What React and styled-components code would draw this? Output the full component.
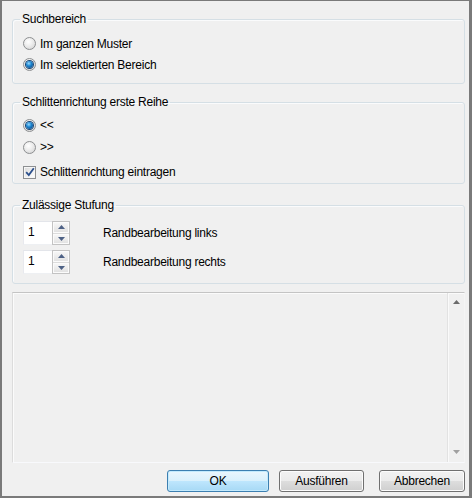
import React from "react";
import styled, { createGlobalStyle } from "styled-components";

const Global = createGlobalStyle`
  html, body { margin: 0; padding: 0; background: #f0f0f0; }
  * { box-sizing: border-box; }
  body { font-family: "Liberation Sans", Arial, sans-serif; font-size: 12px; letter-spacing: -0.25px; color: #000; }
`;

const Window = styled.div`
  width: 472px;
  height: 498px;
  background: #f0f0f0;
  border-style: solid;
  border-color: #7a7a7a;
  border-width: 1px 3px 2px 2px;
  padding: 11px 4px 0 10px;
  display: flex;
  flex-direction: column;
`;

const Group = styled.fieldset`
  margin: ${(p) => p.$top || 0}px 0 0 0;
  padding: 0 0 0 10px;
  border: 1px solid #d5dfe5;
  border-radius: 3px;
  box-shadow: inset 1px 1px 0 #fafbfc;
  min-width: 0;
`;

const Legend = styled.legend`
  padding: 0 2px;
  margin-left: -3px;
  line-height: 14px;
  height: 14px;
`;

const Body = styled.div`
  display: flex;
  flex-direction: column;
  padding-top: ${(p) => p.$pt}px;
  padding-bottom: ${(p) => p.$pb}px;
  gap: ${(p) => p.$gap || 0}px;
`;

const Row = styled.div`
  display: flex;
  align-items: center;
  height: ${(p) => p.$h || 21}px;
  margin-top: ${(p) => p.$mt || 0}px;
`;

const RadioCircle = styled.span`
  width: 13px;
  height: 13px;
  border-radius: 50%;
  border: 1px solid #8d8f91;
  background: radial-gradient(circle at 40% 35%, #ffffff 0%, #eeeeee 40%, #cfcfcf 100%);
  display: flex;
  align-items: center;
  justify-content: center;
  margin-right: 4px;
  flex: none;
`;

const RadioDot = styled.span`
  width: 7px;
  height: 7px;
  border-radius: 50%;
  background: radial-gradient(circle at 40% 35%, #9adbff 0%, #1c86d1 40%, #0a3a72 100%);
  box-shadow: 0 0 0 1px #1b4675;
`;

const CheckBox = styled.span`
  width: 13px;
  height: 13px;
  border: 1px solid #8d8f91;
  background: linear-gradient(135deg, #d8d8d8 0%, #f2f2f2 60%, #ffffff 100%);
  box-shadow: inset 0 0 0 1px #f6f6f6;
  display: flex;
  align-items: center;
  justify-content: center;
  margin-right: 4px;
  flex: none;
`;

const Spinner = styled.div`
  display: flex;
  width: 47px;
  height: 24px;
  flex: none;
`;

const SpinInput = styled.div`
  width: 29px;
  height: 24px;
  background: #fff;
  border-top: 1px solid #e3e5ea;
  border-left: 1px solid #e8e9ee;
  border-bottom: 1px solid #eef0f3;
  padding: 3px 0 0 4px;
  line-height: 14px;
`;

const SpinButtons = styled.div`
  width: 18px;
  display: flex;
  flex-direction: column;
  border: 1px solid #c3c3c3;
  background: #dcdcdc;
  gap: 1px;
`;

const SpinBtn = styled.div`
  flex: 1;
  display: flex;
  align-items: center;
  justify-content: center;
  background: linear-gradient(#f6f6f6, #e2e2e2);
  border: 1px solid #fbfbfb;
`;

const SpinLabel = styled.span`
  margin-left: 33px;
`;

const Panel = styled.div`
  margin-top: 8px;
  height: 171px;
  border-style: solid;
  border-width: 1px;
  border-color: #c4c4c4 #f4f4f4 #f8f9fc #dcdcdc;
  box-shadow: inset 1px 1px 0 #fbfbfb;
  display: flex;
  justify-content: flex-end;
`;

const ScrollBar = styled.div`
  width: 17px;
  border-left: 1px solid #e2e2e2;
  box-shadow: inset 1px 0 0 #fafafa;
  display: flex;
  flex-direction: column;
  justify-content: space-between;
  align-items: center;
  padding: 7px 0 8px 1px;
`;

const ButtonRow = styled.div`
  margin-top: 7px;
  display: flex;
  justify-content: flex-end;
`;

const Button = styled.button`
  width: ${(p) => p.$w}px;
  height: 22px;
  margin-left: ${(p) => p.$ml || 0}px;
  font: inherit;
  letter-spacing: -0.25px;
  color: #000;
  border-radius: 3px;
  border: 1px solid ${(p) => (p.$primary ? "#3c7fb1" : "#707070")};
  background: ${(p) =>
    p.$primary
      ? "linear-gradient(#eaf6fd 0%, #d9f0fc 50%, #bee6fd 51%, #a7d9f5 100%)"
      : "linear-gradient(#f2f2f2 0%, #ebebeb 50%, #dddddd 51%, #cfcfcf 100%)"};
  box-shadow: inset 0 0 0 1px ${(p) => (p.$primary ? "#c3eafd" : "#fcfcfc")};
  padding: 0;
`;

const Tri = ({ up, color = "#4d6185", w = 7, h = 4 }) => (
  <svg width={w} height={h} viewBox={`0 0 ${w} ${h}`}>
    <polygon
      points={up ? `0,${h} ${w / 2},0 ${w},${h}` : `0,0 ${w},0 ${w / 2},${h}`}
      fill={color}
    />
  </svg>
);

const Radio = ({ checked, h, children }) => (
  <Row $h={h}>
    <RadioCircle>{checked && <RadioDot />}</RadioCircle>
    {children}
  </Row>
);

const SpinRow = ({ value, label }) => (
  <Row $h={24}>
    <Spinner>
      <SpinInput>{value}</SpinInput>
      <SpinButtons>
        <SpinBtn>
          <Tri up w={7} h={4} />
        </SpinBtn>
        <SpinBtn>
          <Tri w={7} h={4} />
        </SpinBtn>
      </SpinButtons>
    </Spinner>
    <SpinLabel>{label}</SpinLabel>
  </Row>
);

export default function App() {
  return (
    <>
      <Global />
      <Window>
        <Group>
          <Legend>Suchbereich</Legend>
          <Body $pt={7} $pb={8}>
            <Radio>Im ganzen Muster</Radio>
            <Radio checked>Im selektierten Bereich</Radio>
          </Body>
        </Group>

        <Group $top={11}>
          <Legend>Schlittenrichtung erste Reihe</Legend>
          <Body $pt={5} $pb={1}>
            <Radio checked h={22}>&lt;&lt;</Radio>
            <Radio h={22}>&gt;&gt;</Radio>
            <Row $h={20} $mt={4}>
              <CheckBox>
                <svg width="10" height="10" viewBox="0 0 10 10">
                  <path
                    d="M1.2 5.2 L3.8 8 L8.8 1.2"
                    fill="none"
                    stroke="#2b4f8c"
                    strokeWidth="1.8"
                  />
                </svg>
              </CheckBox>
              Schlittenrichtung eintragen
            </Row>
          </Body>
        </Group>

        <Group $top={14}>
          <Legend>Zulässige Stufung</Legend>
          <Body $pt={9} $pb={9} $gap={5}>
            <SpinRow value="1" label="Randbearbeitung links" />
            <SpinRow value="1" label="Randbearbeitung rechts" />
          </Body>
        </Group>

        <Panel>
          <ScrollBar>
            <Tri up color="#6b6b6b" w={7} h={4} />
            <Tri color="#a0a0a0" w={7} h={4} />
          </ScrollBar>
        </Panel>

        <ButtonRow>
          <Button $primary $w={102}>OK</Button>
          <Button $w={85} $ml={10}>Ausführen</Button>
          <Button $w={86} $ml={15}>Abbrechen</Button>
        </ButtonRow>
      </Window>
    </>
  );
}
